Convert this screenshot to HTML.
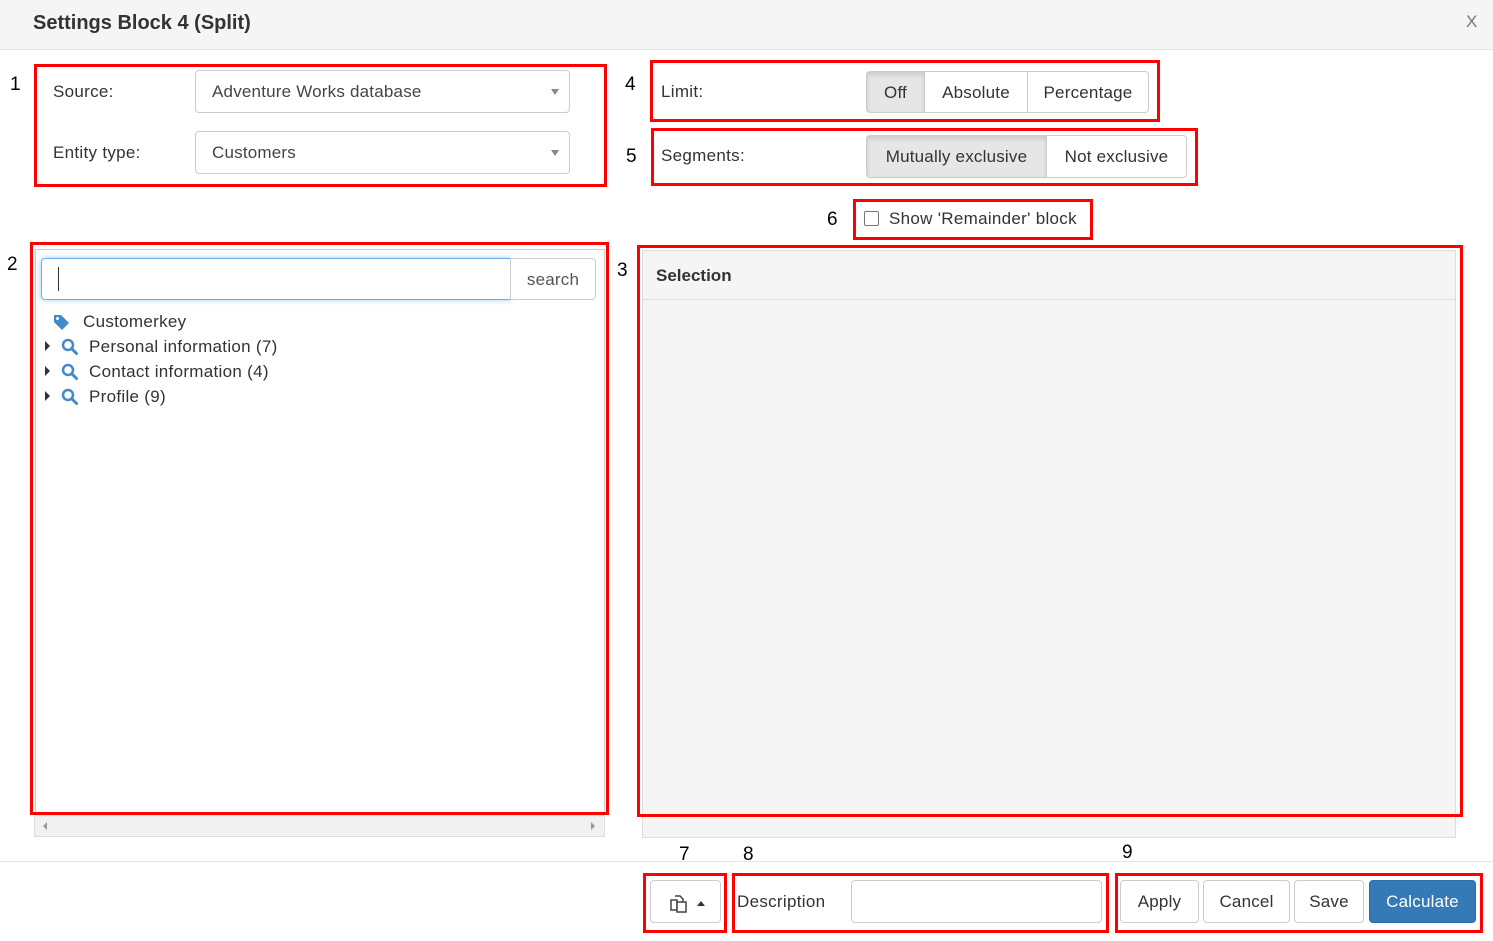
<!DOCTYPE html>
<html><head><style>
*{box-sizing:border-box}
body{margin:0;width:1493px;height:941px;background:#fff;font-family:"Liberation Sans",sans-serif;color:#333;position:relative;overflow:hidden}
.a{position:absolute}
.red{position:absolute;border:3px solid #f00}
.num{position:absolute;font-size:19px;color:#000}
.sel{position:absolute;border:1px solid #ccc;border-radius:4px;font-size:17px;padding-left:16px;line-height:41px;color:#444;letter-spacing:.2px}
.sel:after{content:"";position:absolute;right:10px;top:18px;border:4px solid transparent;border-top:6px solid #888}
.btn{position:absolute;border:1px solid #ccc;font-size:17px;text-align:center;color:#333;background:#fff;letter-spacing:.2px}
.lbl{position:absolute;font-size:17px;color:#333;letter-spacing:.3px}
.tri{position:absolute;width:0;height:0;border-top:5px solid transparent;border-bottom:5px solid transparent;border-left:5px solid #333}
</style></head><body>
<div class="a" style="left:0;top:0;width:1493px;height:50px;background:#f5f5f5;border-bottom:1px solid #e5e5e5"></div>
<div class="a" style="left:33px;top:12px;font-size:20px;font-weight:bold;color:#333">Settings Block 4 (Split)</div>
<div class="a" style="left:1466px;top:12px;font-size:17px;color:#777">X</div>

<div class="num" style="left:10px;top:74px">1</div>
<div class="red" style="left:34px;top:64px;width:573px;height:123px"></div>
<div class="lbl" style="left:53px;top:82px">Source:</div>
<div class="sel" style="left:195px;top:70px;width:375px;height:43px">Adventure Works database</div>
<div class="lbl" style="left:53px;top:143px">Entity type:</div>
<div class="sel" style="left:195px;top:131px;width:375px;height:43px">Customers</div>

<div class="num" style="left:625px;top:74px">4</div>
<div class="red" style="left:650px;top:60px;width:510px;height:62px"></div>
<div class="lbl" style="left:661px;top:82px">Limit:</div>
<div class="btn" style="left:866px;top:71px;width:59px;height:42px;line-height:41px;background:#e6e6e6;border-radius:4px 0 0 4px;box-shadow:inset 0 3px 5px rgba(0,0,0,.12)">Off</div>
<div class="btn" style="left:924px;top:71px;width:104px;height:42px;line-height:41px">Absolute</div>
<div class="btn" style="left:1027px;top:71px;width:122px;height:42px;line-height:41px;border-radius:0 4px 4px 0">Percentage</div>

<div class="num" style="left:626px;top:146px">5</div>
<div class="red" style="left:651px;top:128px;width:547px;height:58px"></div>
<div class="lbl" style="left:661px;top:146px">Segments:</div>
<div class="btn" style="left:866px;top:135px;width:181px;height:43px;line-height:42px;background:#e6e6e6;border-radius:4px 0 0 4px;box-shadow:inset 0 3px 5px rgba(0,0,0,.12)">Mutually exclusive</div>
<div class="btn" style="left:1046px;top:135px;width:141px;height:43px;line-height:42px;border-radius:0 4px 4px 0">Not exclusive</div>

<div class="num" style="left:827px;top:209px">6</div>
<div class="red" style="left:853px;top:199px;width:240px;height:41px"></div>
<div class="a" style="left:864px;top:211px;width:15px;height:15px;border:1px solid #777;border-radius:2px"></div>
<div class="lbl" style="left:889px;top:209px">Show 'Remainder' block</div>

<div class="num" style="left:7px;top:254px">2</div>
<div class="a" style="left:35px;top:249px;width:570px;height:566px;border:1px solid #ccc"></div>
<div class="red" style="left:30px;top:242px;width:579px;height:573px"></div>
<div class="a" style="left:41px;top:258px;width:470px;height:42px;border:1px solid #66afe9;border-radius:4px 0 0 4px;box-shadow:0 0 6px rgba(102,175,233,.6)"></div>
<div class="a" style="left:58px;top:267px;width:1px;height:24px;background:#333"></div>
<div class="btn" style="left:510px;top:258px;width:86px;height:42px;line-height:41px;border-radius:0 4px 4px 0;color:#555">search</div>
<svg class="a" style="left:53px;top:314px" width="17" height="17" viewBox="0 0 17 17"><path d="M1 1h7l8 8-7 7-8-8z" fill="#428bca"/><circle cx="4.5" cy="4.5" r="1.5" fill="#fff"/></svg>
<div class="lbl" style="left:83px;top:312px">Customerkey</div>
<div class="tri" style="left:45px;top:341px"></div>
<div class="tri" style="left:45px;top:366px"></div>
<div class="tri" style="left:45px;top:391px"></div>
<svg class="a" style="left:61px;top:338px" width="18" height="18" viewBox="0 0 18 18"><circle cx="7" cy="7" r="5" fill="none" stroke="#428bca" stroke-width="2.5"/><path d="M10.5 10.5l5 5" stroke="#428bca" stroke-width="3" stroke-linecap="round"/></svg>
<svg class="a" style="left:61px;top:363px" width="18" height="18" viewBox="0 0 18 18"><circle cx="7" cy="7" r="5" fill="none" stroke="#428bca" stroke-width="2.5"/><path d="M10.5 10.5l5 5" stroke="#428bca" stroke-width="3" stroke-linecap="round"/></svg>
<svg class="a" style="left:61px;top:388px" width="18" height="18" viewBox="0 0 18 18"><circle cx="7" cy="7" r="5" fill="none" stroke="#428bca" stroke-width="2.5"/><path d="M10.5 10.5l5 5" stroke="#428bca" stroke-width="3" stroke-linecap="round"/></svg>
<div class="lbl" style="left:89px;top:337px">Personal information (7)</div>
<div class="lbl" style="left:89px;top:362px">Contact information (4)</div>
<div class="lbl" style="left:89px;top:387px">Profile (9)</div>
<div class="a" style="left:34px;top:815px;width:571px;height:22px;background:#f1f1f1;border:1px solid #ddd"></div>
<div class="a" style="left:43px;top:822px;border-top:4px solid transparent;border-bottom:4px solid transparent;border-right:4px solid #999"></div>
<div class="a" style="left:591px;top:822px;border-top:4px solid transparent;border-bottom:4px solid transparent;border-left:4px solid #999"></div>

<div class="num" style="left:617px;top:260px">3</div>
<div class="a" style="left:642px;top:250px;width:814px;height:588px;background:#f5f5f5;border:1px solid #ddd"></div>
<div class="a" style="left:643px;top:299px;width:812px;height:1px;background:#ddd"></div>
<div class="a" style="left:656px;top:266px;font-size:17px;font-weight:bold;color:#333">Selection</div>
<div class="red" style="left:637px;top:245px;width:826px;height:572px"></div>

<div class="a" style="left:0;top:861px;width:1493px;height:1px;background:#e5e5e5"></div>
<div class="num" style="left:679px;top:844px">7</div>
<div class="num" style="left:743px;top:844px">8</div>
<div class="num" style="left:1122px;top:842px">9</div>

<div class="red" style="left:643px;top:873px;width:84px;height:60px"></div>
<div class="btn" style="left:650px;top:880px;width:71px;height:43px;border-radius:4px"></div>
<svg class="a" style="left:670px;top:893px" width="20" height="20" viewBox="0 0 20 20"><path d="M5 3h5l3 3v3M1 7h6v10H1z" fill="none" stroke="#444" stroke-width="1.5"/><path d="M7 9h9v10H7z" fill="#fff" stroke="#444" stroke-width="1.5"/></svg>
<div class="a" style="left:697px;top:901px;border-left:4px solid transparent;border-right:4px solid transparent;border-bottom:5px solid #333"></div>

<div class="red" style="left:732px;top:873px;width:377px;height:60px"></div>
<div class="lbl" style="left:737px;top:892px">Description</div>
<div class="a" style="left:851px;top:880px;width:251px;height:43px;border:1px solid #ccc;border-radius:4px"></div>

<div class="red" style="left:1115px;top:873px;width:368px;height:60px"></div>
<div class="btn" style="left:1120px;top:880px;width:79px;height:43px;line-height:42px;border-radius:4px">Apply</div>
<div class="btn" style="left:1203px;top:880px;width:87px;height:43px;line-height:42px;border-radius:4px">Cancel</div>
<div class="btn" style="left:1294px;top:880px;width:70px;height:43px;line-height:42px;border-radius:4px">Save</div>
<div class="btn" style="left:1369px;top:880px;width:107px;height:43px;line-height:42px;border-radius:4px;background:#337ab7;border-color:#2e6da4;color:#fff">Calculate</div>
</body></html>
